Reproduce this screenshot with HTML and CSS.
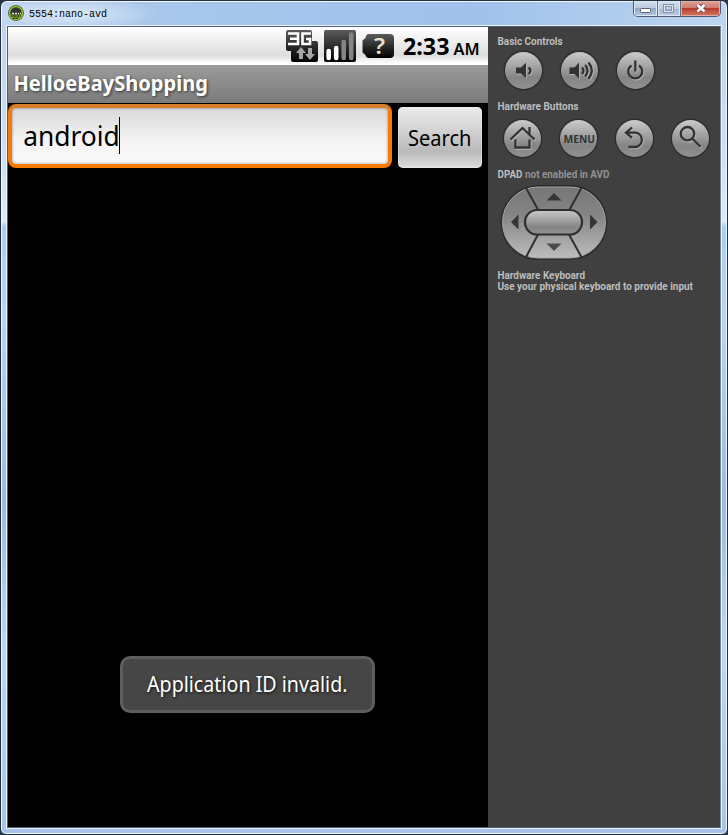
FILE: index.html
```html
<!DOCTYPE html>
<html lang="en">
<head>
<meta charset="utf-8">
<title>5554:nano-avd</title>
<link rel="stylesheet" href="styles.css">
</head>
<body>
<div class="window">
  <header class="titlebar">
    <svg class="appicon" width="16" height="16" viewBox="0 0 16 16"><circle cx="8" cy="8" r="7.8" fill="#263310"/><circle cx="8" cy="8" r="6.500" fill="#648323" stroke="#94bd2e" stroke-width="1.600"/><path d="M2.500 7.500a5.500 5 0 0 1 11 0v2h-11z" fill="#303432"/><path d="M4 8.500h2M7 8.500h2M10 8.500h1M12 8.500h1" stroke="#eee" stroke-width="1.400"/><path d="M3 11h10M5 13.500h6" stroke="#2d3b13" stroke-dasharray="2 1"/></svg>
    <svg class="caption" width="84" height="16"><text x="0" y="11" textLength="78" lengthAdjust="spacingAndGlyphs">5554:nano-avd</text></svg>
    <div class="winbuttons">
      <span class="wb min"><svg width="12" height="6"><rect x=".5" y=".5" width="10" height="4" rx="1" fill="#fff" stroke="#59606f"/></svg></span>
      <span class="wb max"><svg width="12" height="10"><rect x="1.500" y="1.500" width="8" height="6" fill="none" stroke="#8594aa" stroke-width="3"/><rect x="1.500" y="1.500" width="8" height="6" fill="none" stroke="#dde5f0"/></svg></span>
      <span class="wb close"><svg width="12" height="11" viewBox="0 0 12 11"><path d="M2.500 2l7 6.500M9.500 2l-7 6.500" stroke="#5d4650" stroke-width="4.400"/><path d="M2.500 2l7 6.500M9.500 2l-7 6.500" stroke="#fff" stroke-width="2.600"/></svg></span>
    </div>
  </header>
  <div class="client">
    <main class="phone">
      <div class="status">
        <svg width="480" height="38" viewBox="8 27 480 38">
          <defs>
            <linearGradient id="dark" x1="0" y1="0" x2="0" y2="1"><stop offset="0" stop-color="#5c5c5c"/><stop offset=".55" stop-color="#272727"/><stop offset="1" stop-color="#000"/></linearGradient>
          </defs>
          <path d="M288 30h22q2 0 2 2v9h4q2 0 2 2v17q0 2-2 2h-23q-2 0-2-2v-9h-3q-2 0-2-2V32q0-2 2-2z" fill="url(#dark)"/>
          <path d="M288 33.500h10v10.500h-10M290 38.800h8M311 33.500h-8.500v10.500h7.500v-5h-4" fill="none" stroke="#fff" stroke-width="2.600"/>
          <path d="M301 47l5 6h-3v6h-4v-6h-3zM310 60l-5-6h3v-6h4v6h3z" fill="#a5a5a5"/>
          <rect x="324" y="30" width="32" height="32" rx="2" fill="url(#dark)"/>
          <path d="M328.700 51v7M336.200 48v10" stroke="#fff" stroke-width="4.600" stroke-linecap="round"/>
          <path d="M343.700 42v16M351.200 34.500v23.500" stroke="#858585" stroke-width="4.600" stroke-linecap="round"/>
          <path d="M369 34h21q4 0 4 4v16q0 4-4 4h-21q-3 0-3.500-3l-3-2.500v-12l3-2.500q.5-4 3.500-4z" fill="url(#dark)"/>
          <text class="battery" x="374" y="53.800" textLength="11" lengthAdjust="spacingAndGlyphs">?</text>
          <text class="time" x="403" y="54.700" textLength="46.500" lengthAdjust="spacingAndGlyphs">2:33</text>
          <text class="ampm" x="453.500" y="54.700" textLength="26" lengthAdjust="spacingAndGlyphs">AM</text>
        </svg>
      </div>
      <div class="apptitle"><svg width="220" height="38"><text x="5.500" y="25.800" textLength="194.500" lengthAdjust="spacingAndGlyphs">HelloeBayShopping</text></svg></div>
      <div class="search">
        <div class="field"><svg width="120" height="54"><text x="11.200" y="37.600" textLength="96.500" lengthAdjust="spacingAndGlyphs">android</text><path d="M107.500 9v37" stroke="#000"/></svg></div>
        <div class="button"><svg width="84" height="61"><text x="10" y="39" textLength="63.500" lengthAdjust="spacingAndGlyphs">Search</text></svg></div>
      </div>
      <div class="screen">
        <div class="toast"><svg width="249" height="51"><text x="24" y="33" textLength="200.500" lengthAdjust="spacingAndGlyphs">Application ID invalid.</text></svg></div>
      </div>
    </main>
    <aside class="side">
      <svg width="232" height="280" viewBox="488 27 232 280">
        <defs>
          <linearGradient id="metal" x1="0" y1="0" x2="0" y2="1"><stop offset="0" stop-color="#cbcbcb"/><stop offset=".7" stop-color="#848484"/><stop offset="1" stop-color="#929292"/></linearGradient>
          <linearGradient id="pad" x1="0" y1="0" x2="0" y2="1"><stop offset="0" stop-color="#777"/><stop offset=".4" stop-color="#858585"/><stop offset="1" stop-color="#bdbdbd"/></linearGradient>
          <g id="knob"><circle r="20.300" fill="#373737"/><circle r="19.400" fill="#2c2c2c"/><circle r="18.500" fill="url(#metal)"/></g>
          <g id="low"><path class="solid" d="M516 67.500h5l5-4.700v15.400l-5-4.700h-5z"/><path d="M528.500 67.500q4 3 0 6.500"/></g>
          <g id="high"><path class="solid" d="M569.500 67.500h5l4.500-5v16.500l-4.500-5h-5z"/><path d="M582 67.500q3 3 0 6.500M585.200 65q4.500 5.500 0 11.500M588.500 62.500q6.500 8 0 16.500"/></g>
          <path id="power" d="M631.500 65.500a7 7 0 1 0 7.500 0M635.300 60.500v11"/>
          <path id="home" d="M510.500 139.500l12-11.500 12 11.500M529.500 134v-7M515.500 139.500v8h14v-8"/>
          <path id="back" d="M632 127.500l-6 5.200 6 5.200M627 132.700h9a7.300 7.300 0 0 1 0 14.300h-7.500"/>
          <g id="lens"><circle cx="687.500" cy="133.700" r="6.700"/><path d="M692.500 138.700l8 8"/></g>
        </defs>
        <text class="label" x="497.500" y="45" textLength="65" lengthAdjust="spacingAndGlyphs">Basic Controls</text>
        <use href="#knob" x="523.500" y="70.500"/><use href="#knob" x="579.500" y="70.500"/><use href="#knob" x="635.500" y="70.500"/>
        <text class="label" x="497.500" y="110" textLength="81" lengthAdjust="spacingAndGlyphs">Hardware Buttons</text>
        <use href="#knob" x="522.500" y="138.500"/><use href="#knob" x="578.500" y="138.500"/><use href="#knob" x="634.500" y="138.500"/><use href="#knob" x="690.500" y="138.500"/>
        <g class="lit" transform="translate(.8 1)"><use href="#low"/><use href="#high"/><use href="#power"/><use href="#home"/><use href="#back"/><use href="#lens"/></g>
        <g class="glyph"><use href="#low"/><use href="#high"/><use href="#power"/><use href="#home"/><use href="#back"/><use href="#lens"/></g>
        <text class="menu" x="563.500" y="143" textLength="31.500" lengthAdjust="spacingAndGlyphs">MENU</text>
        <text class="label" x="497.500" y="178" textLength="25" lengthAdjust="spacingAndGlyphs">DPAD</text>
        <text class="label muted" x="525" y="178" textLength="84.500" lengthAdjust="spacingAndGlyphs">not enabled in AVD</text>
        <rect x="500.500" y="185" width="107" height="75" rx="37.500" fill="#2d2d2d"/>
        <rect x="502.500" y="187" width="103" height="71" rx="35.500" fill="url(#pad)" stroke="#a5a5a5"/>
        <path d="M525.500 187l13 23.500M582 187l-13 23.500M525.500 258l12.500-23.500M582 258l-13-23.500" stroke="#303030" stroke-width="2"/>
        <rect x="525" y="210" width="57" height="24.500" rx="12.200" fill="url(#metal)" stroke="#2e2e2e" stroke-width="2.200"/>
        <path d="M546.500 200.500l7.500-7.500 7.500 7.500zM518.500 214.500v15l-7.500-7.500zM590 214.500v15l7.500-7.500z" fill="#353535"/><path d="M546.500 243.500h15l-7.500 7.500z" fill="#4b4b4b"/>
        <text class="label" x="497.500" y="279" textLength="87.500" lengthAdjust="spacingAndGlyphs">Hardware Keyboard</text>
        <text class="label" x="497.500" y="290" textLength="195.500" lengthAdjust="spacingAndGlyphs">Use your physical keyboard to provide input</text>
      </svg>
    </aside>
  </div>
</div>
</body>
</html>
```
FILE: styles.css
```css
* { box-sizing: border-box; }
body { margin: 0; background: #28364a; }
svg { display: block; overflow: visible; }
.window {
  width: 728px; height: 835px; overflow: hidden;
  border: 1px solid #28303d; border-radius: 7px 7px 6px 6px;
  padding: 0 6px 6px;
  background: radial-gradient(ellipse 90px 16px at 70px 13px, #dbe8f6, transparent) no-repeat,
    linear-gradient(90deg, #bcd4ef 0, #a8c7eb 20%, #9fc1eb 65%, #bdd5ef 100%) top / 100% 26px no-repeat,
    linear-gradient(#bdd2ec 0, #cddff2 18%, #dcebf9 26.5%, #a8cef7 27%, #b5d5f8 38%, #98bce5 60%, #bad7f8 78%, #a6c4eb 100%);
  box-shadow: inset 0 0 0 1px #f0f7ff;
}
.titlebar { display: flex; height: 25px; align-items: flex-start; }
.appicon { margin: 4px 0 0 1px; }
.caption { margin: 5px 0 0 5px; }
.caption text { font: 11px "Liberation Mono", monospace; fill: #000; }
.winbuttons { display: flex; width: 88px; height: 16px; margin: 0 0 0 auto; border: 1px solid #505b70; border-top: 0; border-radius: 0 0 5px 5px; overflow: hidden; }
.wb { display: flex; align-items: center; justify-content: center; width: 24px; background: linear-gradient(#d3dfec, #b9c9dd 48%, #91a8c4 50%, #b5cae2); box-shadow: inset 0 0 0 1px #dce8f4; border-right: 1px solid #617087; }
.min { padding-top: 4px; }
.max { width: 23px; background: linear-gradient(#d3dfec, #becede 50%, #a7bad1 52%, #bacde2); }
.close { flex: 1; border-right: 0; background: linear-gradient(#dfa299, #ce7a6e 47%, #b63b2b 50%, #d47a62); box-shadow: inset 0 0 0 1px #e4aba0; }
.client { display: flex; width: 714px; height: 802px; border: 1px solid #4e6077; border-right-color: #768498; box-shadow: 0 0 0 1px #e9f3fd; background: #404040; }
.phone { display: flex; flex-direction: column; width: 480px; height: 800px; background: #000; font-family: "Noto Sans", sans-serif; }
.status { height: 38px; background: linear-gradient(#fff 0, #f7f7f7 20%, #dddddd 75%, #fafafa 93%, #fff 100%); }
.time { font: 700 23px "Noto Sans", sans-serif; }
.ampm { font: 600 16.5px "Noto Sans", sans-serif; }
.battery { font: 600 22px "Noto Sans", sans-serif; fill: #e8e2cd; }
.apptitle { height: 38px; background: linear-gradient(#9c9b9c, #7b7b7b); }
.apptitle text { font: 700 21.3px "Noto Sans", sans-serif; fill: #fff; text-shadow: 1px 1px 3px #333; }
.search { display: flex; align-items: flex-start; gap: 6px; height: 65px; padding: 1px 6px 0 0; }
.field { width: 384px; height: 64px; border: 4px solid #f77a06; border-top-color: #d87e2b; border-radius: 8px; background: linear-gradient(#d8d8d8, #f3f3f3 55%, #fafafa); box-shadow: inset 0 0 3px #888; }
.field text { font: 26.8px "Noto Sans", sans-serif; }
.button { width: 84px; height: 61px; margin-top: 3px; border-radius: 5px; background: linear-gradient(#ececec, #d5d5d5 35%, #b9b9b9 73%, #dfdfdf); box-shadow: inset 0 0 2px #fff; }
.button text { font: 21.3px "Noto Sans", sans-serif; }
.screen { flex: 1; display: flex; align-items: flex-end; padding: 0 0 114px 112px; }
.toast { width: 255px; height: 57px; border: 3px solid #5d5e5d; border-radius: 10px; background: #454645; }
.toast text { font: 21.3px "Noto Sans", sans-serif; fill: #fff; text-shadow: 1px 1px 3px #111; }
.side { width: 232px; background: #404040; }
.label { font: 700 10px Roboto, sans-serif; fill: #bdbdbd; }
.muted { fill: #929292; }
.menu { font: 700 11px "Noto Sans", sans-serif; fill: #333; }
.glyph { color: #333; fill: none; stroke: #333; stroke-width: 2.3; }
.lit { color: #b7b7b7; fill: none; stroke: #b7b7b7; stroke-width: 2.3; }
.solid { fill: currentColor; stroke: none; }
```
